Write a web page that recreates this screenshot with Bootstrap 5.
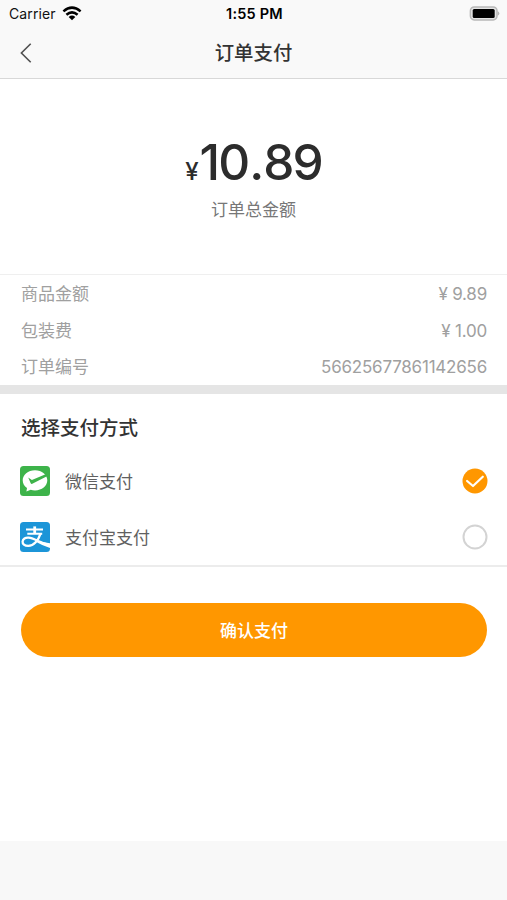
<!DOCTYPE html>
<html lang="zh-CN">
<head>
<meta charset="utf-8">
<meta name="viewport" content="width=device-width, initial-scale=1">
<title>订单支付</title>
<link href="https://cdn.jsdelivr.net/npm/bootstrap@5.3.0/dist/css/bootstrap.min.css" rel="stylesheet">
<style>
body{font-family:Inter,"Noto Sans CJK SC",sans-serif;font-size:17px;line-height:24px;color:#333;height:900px;overflow:hidden}
.top-area{background:#f9f9f9;height:79px;border-bottom:1px solid #d8d8d8}
.status{height:27px;padding:0 7px 0 9px;font-size:14px;color:#111}
.status>*{flex:1 1 0}
.carrier{letter-spacing:.1px;margin-right:6px}
.status .clock{font-weight:600;color:#000;font-size:14.5px;letter-spacing:.2px}
.title-bar{height:51px;padding:0 20px}
.title-bar>*{flex:1 1 0}
.title-bar h1{font-size:19.4px;font-weight:500;line-height:28px}
.total{height:195px;padding-top:57px}
.amount{font-weight:550;font-size:49.5px;line-height:52px;letter-spacing:-1.9px;color:#2c2c2c}
.point{margin:0 1px}
.yen{font-size:24px;font-weight:500;letter-spacing:0;margin-right:1px}
.caption-text{color:#777}
.details{border-top:1px solid #efefef;padding:1px 20px 0 21px;color:#a0a0a0;height:111px}
.details>div{height:36.6px}
.num{letter-spacing:-.22px}
.divider{height:9px;background:#e5e5e5}
.methods{height:173px;padding:0 19px 0 20px;border-bottom:2px solid #ececec;color:#606060}
.methods h2{font-size:19.5px;font-weight:500;line-height:28px;padding:20px 0 11px 1px;color:#333}
.method{height:56px}
.method span{padding-top:2px;margin-left:15px}
.pay-btn{height:54px;margin:36px 20px 0 21px;padding:9px 0 6px;background:#ff9700;color:#fff;font-size:17px;font-weight:500}
.bottom-area{background:#f8f8f8;height:59px}
</style>
<script src="https://cdn.jsdelivr.net/npm/bootstrap@5.3.0/dist/js/bootstrap.bundle.min.js"></script>
</head>
<body class="d-flex flex-column bg-white">
<header class="top-area flex-shrink-0">
  <div class="status d-flex align-items-center">
    <div class="d-flex align-items-center"><span class="carrier">Carrier</span>
      <svg width="20" height="15" viewBox="0 0 20 15" aria-hidden="true"><g fill="none" stroke="#000" stroke-width="2.5"><path d="M1.4 5.4Q10-2.2 18.6 5.4"/><path d="M4.4 8.8Q10 3.9 15.6 8.8"/></g><path d="M6.7 11Q10 8.2 13.3 11L10 14.3Z"/></svg>
    </div>
    <div class="clock text-center">1:55 PM</div>
    <div class="d-flex justify-content-end">
      <svg width="31" height="15" viewBox="0 0 31 15" aria-hidden="true"><rect x="1.4" y=".9" width="26.6" height="13" rx="3.8" fill="#e4e4e4" stroke="#b8b8b8" stroke-width="1.5"/><rect x="3.7" y="2.9" width="22" height="9" rx="1.5"/><path d="M28.7 5Q32 7.4 28.7 9.8Z" fill="#b5b5b5"/></svg>
    </div>
  </div>
  <nav class="title-bar d-flex align-items-center">
    <a href="#" class="d-flex" aria-label="返回"><svg width="12" height="20" viewBox="0 0 12 20" fill="none" stroke="#505050" stroke-width="1.6"><path d="M10.7 .7L1.4 10L10.7 19.3"/></svg></a>
    <h1 class="m-0 text-center">订单支付</h1>
    <span></span>
  </nav>
</header>
<main class="flex-grow-1">
  <section class="total text-center">
    <div class="amount"><span class="yen">¥</span>10<span class="point">.</span>89</div>
    <div class="caption-text">订单总金额</div>
  </section>
  <section class="details">
    <div class="d-flex align-items-center justify-content-between"><span>商品金额</span><span class="num">¥ 9.89</span></div>
    <div class="d-flex align-items-center justify-content-between"><span>包装费</span><span class="num">¥ 1.00</span></div>
    <div class="d-flex align-items-center justify-content-between"><span>订单编号</span><span class="num">56625677861142656</span></div>
  </section>
  <div class="divider"></div>
  <section class="methods">
    <h2 class="m-0">选择支付方式</h2>
    <div class="method d-flex align-items-center">
      <svg width="30" height="30" viewBox="0 0 30 30" aria-hidden="true"><rect width="30" height="30" rx="3.5" fill="#3db34a"/><path d="M15 4.2C8 4.2 2.7 8.7 2.7 14.3C2.7 17.6 4.3 20.3 7 22.1L6.4 25.6L10.7 23.8C12 24.2 13.5 24.4 15 24.4C21.9 24.4 27.3 19.9 27.3 14.3C27.3 8.7 21.9 4.2 15 4.2Z" fill="#fff"/><path d="M8.2 11.4L11.9 14.1L25.6 8.3L27 10.2L12.3 17.8Q11.2 18.2 10.7 17.2Z" fill="#3db34a"/></svg>
      <span class="flex-grow-1">微信支付</span>
      <svg width="26" height="26" viewBox="0 0 26 26" role="img" aria-label="已选"><circle cx="13" cy="13" r="12.5" fill="#ff9700"/><path d="M5.1 13L11 18L20.8 8.7" fill="none" stroke="#fff" stroke-width="2.2" stroke-linecap="round" stroke-linejoin="round"/></svg>
    </div>
    <div class="method d-flex align-items-center">
      <svg width="30" height="30" viewBox="0 0 30 30" aria-hidden="true"><rect width="30" height="30" rx="3.5" fill="#1c95d8"/><g fill="none" stroke="#fff"><path d="M6 7.6H23M7.3 11.8H22.2" stroke-width="2"/><path d="M14.7 4.4V12" stroke-width="2.8"/><path d="M20.6 11.4C18.4 18.4 13.8 23.9 8.3 23.9C4.4 23.9 2.4 21.9 2.6 19.5C2.8 16.8 5.3 15.3 8.7 15.6C14 16 19 20.4 29 22.9" stroke-width="2.3"/></g><path d="M17 18.2Q23 20.8 30 21.2V26Q23 24 15.8 19.8Z" fill="#fff"/></svg>
      <span class="flex-grow-1">支付宝支付</span>
      <svg width="26" height="26" viewBox="0 0 26 26" role="img" aria-label="未选"><circle cx="13" cy="13" r="11.5" fill="#fff" stroke="#d3d3d3" stroke-width="2"/></svg>
    </div>
  </section>
  <div class="d-flex"><button type="button" class="pay-btn btn border-0 rounded-pill flex-grow-1">确认支付</button></div>
</main>
<footer class="bottom-area flex-shrink-0"></footer>
</body>
</html>
